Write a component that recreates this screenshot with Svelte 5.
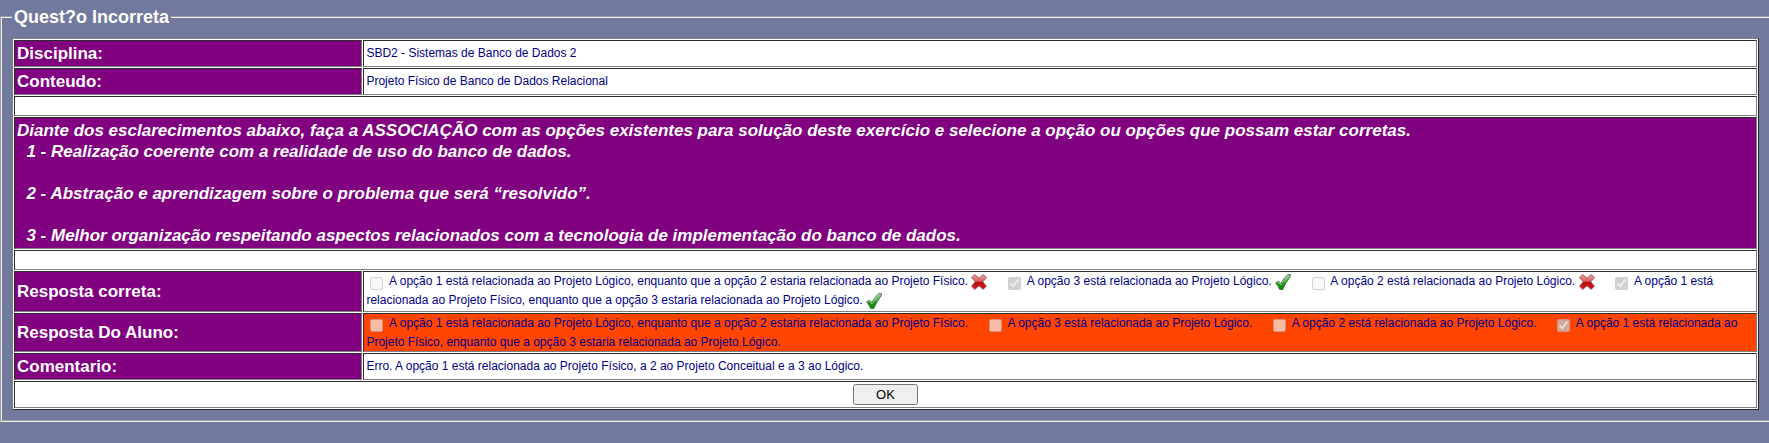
<script>
  const options = [
    { text: 'A opção 1 está relacionada ao Projeto Lógico, enquanto que a opção 2 estaria relacionada ao Projeto Físico.', correct: false, chosen: false },
    { text: 'A opção 3 está relacionada ao Projeto Lógico.', correct: true, chosen: false },
    { text: 'A opção 2 está relacionada ao Projeto Lógico.', correct: false, chosen: false },
    { text: 'A opção 1 está relacionada ao Projeto Físico, enquanto que a opção 3 estaria relacionada ao Projeto Lógico.', correct: true, chosen: true }
  ];
</script>

{#snippet tick()}
  <svg class="mark" viewBox="0 0 16 16" aria-hidden="true">
    <defs>
      <linearGradient id="green" x1="0" y1="0" x2="0" y2="1">
        <stop offset="0" stop-color="#9ad096" />
        <stop offset="0.45" stop-color="#4cb03f" />
        <stop offset="0.6" stop-color="#149a06" />
        <stop offset="1" stop-color="#0b8a00" />
      </linearGradient>
    </defs>
    <path d="M.6 8.8 3.6 7.2 5.8 9.6Q9 3.8 12.8.6L15.5.8 15.4 2.6Q10.8 8 7.8 15.4L4.6 15.4Q3.4 12 .6 8.8Z" fill="url(#green)" stroke="#46664a" stroke-width=".9" stroke-linejoin="round" />
    <path d="M2 9.1 3.4 8.3 5.9 11Q9.3 4.8 13.2 1.6" fill="none" stroke="#c5ecc0" stroke-width=".7" />
  </svg>
{/snippet}

{#snippet cross()}
  <svg class="mark" viewBox="0 0 16 16" aria-hidden="true">
    <defs>
      <linearGradient id="red" x1="0" y1="0" x2="0" y2="1">
        <stop offset="0" stop-color="#f0a0a0" />
        <stop offset="0.45" stop-color="#dc5a5e" />
        <stop offset="0.52" stop-color="#b90c14" />
        <stop offset="1" stop-color="#e0161c" />
      </linearGradient>
    </defs>
    <path d="M3.8.6 8 4.2 12.2.6 15.4 3.6 11.8 7.8 15.4 12.2 12.2 15.4 8 11.8 3.8 15.4.6 12.2 4.2 7.8.6 3.6Z" fill="url(#red)" stroke="#8f5a5c" stroke-width=".9" stroke-linejoin="round" />
  </svg>
{/snippet}

<main>
  <fieldset>
    <legend>Quest?o Incorreta</legend>
    <table>
      <tbody>
        <tr><th scope="row">Disciplina:</th><td class="value">SBD2 - Sistemas de Banco de Dados 2</td></tr>
        <tr><th scope="row">Conteudo:</th><td class="value">Projeto Físico de Banco de Dados Relacional</td></tr>
        <tr><td colspan="2">&nbsp;</td></tr>
        <tr>
          <td colspan="2" class="question">
            Diante dos esclarecimentos abaixo, faça a ASSOCIAÇÃO com as opções existentes para solução deste exercício e selecione a opção ou opções que possam estar corretas.<br />
            &nbsp;&nbsp;1 - Realização coerente com a realidade de uso do banco de dados.<br /><br />
            &nbsp;&nbsp;2 - Abstração e aprendizagem sobre o problema que será “resolvido”.<br /><br />
            &nbsp;&nbsp;3 - Melhor organização respeitando aspectos relacionados com a tecnologia de implementação do banco de dados.
          </td>
        </tr>
        <tr><td colspan="2">&nbsp;</td></tr>
        <tr>
          <th scope="row">Resposta correta:</th>
          <td>
            {#each options as o}
              <label><input type="checkbox" checked={o.correct} disabled /> {o.text}</label>
              {#if o.correct}{@render tick()}{:else}{@render cross()}{/if}&nbsp;&nbsp;&nbsp;&nbsp;{' '}
            {/each}
          </td>
        </tr>
        <tr>
          <th scope="row">Resposta Do Aluno:</th>
          <td class="student">
            {#each options as o}
              <label><input type="checkbox" checked={o.chosen} disabled /> {o.text}</label>&nbsp;&nbsp;&nbsp;&nbsp;{' '}
            {/each}
          </td>
        </tr>
        <tr><th scope="row">Comentario:</th><td class="value">Erro. A opção 1 está relacionada ao Projeto Físico, a 2 ao Projeto Conceitual e a 3 ao Lógico.</td></tr>
        <tr><td colspan="2" class="actions"><button type="button">OK</button></td></tr>
      </tbody>
    </table>
  </fieldset>
</main>

<style>
  :global(body) {
    background: #71799d;
  }
  main {
    overflow: hidden;
    padding: 6px 0 21px;
    font-family: "Liberation Sans", Arial, sans-serif;
  }
  fieldset {
    margin: 0 -2px 0 0;
    padding: 10px;
    border: 2px groove #f0f0f0;
  }
  legend {
    padding: 0 2px;
    color: #fff;
    font-size: 18px;
    font-weight: bold;
    line-height: 22px;
  }
  table {
    width: 100%;
    border: 1px outset gray;
    border-collapse: separate;
    border-spacing: 1px;
    background: #fff;
  }
  th,
  td {
    padding: 2px;
    border: 1px inset gray;
  }
  td {
    color: #00008b;
    font-size: 12px;
    line-height: normal;
  }
  .value {
    padding-bottom: 4px;
  }
  th,
  .question {
    background: #800080;
    color: #fff;
    font-size: 17px;
    font-weight: bold;
    line-height: 21px;
    text-align: left;
  }
  th {
    width: 20%;
  }
  .question {
    font-style: italic;
  }
  .student {
    background: #ff4500;
  }
  input {
    width: 13px;
    height: 13px;
    margin: 3px 3px 3px 4px;
    vertical-align: top;
  }
  .mark {
    width: 16px;
    height: 16px;
    vertical-align: top;
  }
  .actions {
    text-align: center;
  }
  button {
    display: block;
    width: 65px;
    height: 21px;
    margin: 0 auto;
    padding: 1px 6px;
    font-family: inherit;
    font-size: 13px;
  }
</style>
